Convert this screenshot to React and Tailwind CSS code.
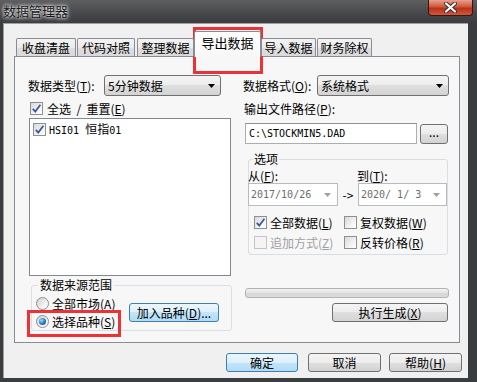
import React from 'react'

const btnFace = 'border-[#707070] bg-[linear-gradient(#f4f4f4,#ececec_50%,#dfdfdf_50%,#d3d3d3)]'
const btnFocus = 'border-[#3c7fb1] bg-[linear-gradient(#ecf6fd,#dcf0fc_50%,#c4e5fa_50%,#b0dbf5)]'

function Key({ k }) {
  return <span className="whitespace-nowrap">(<span className="underline underline-offset-1">{k}</span>)</span>
}

function Check({ on, off }) {
  return (
    <span className={`w-[13px] h-[13px] border flex items-center justify-center shrink-0 ${off ? 'border-[#c4c4c4] bg-[#f4f4f4]' : 'border-[#8e8f8f] bg-[linear-gradient(135deg,#d8d8d8,#f7f7f7_70%,#ffffff)]'}`}>
      {on && (
        <svg width="11" height="11" viewBox="0 0 11 11">
          <path d="M1.8 5.8 L4.3 8.6 L9.4 1.8" fill="none" stroke="#3d5a9e" strokeWidth="1.8" />
        </svg>
      )}
    </span>
  )
}

function Radio({ on }) {
  return (
    <span className="w-[13px] h-[13px] rounded-full border border-[#8e8f8f] bg-[linear-gradient(135deg,#cfcfcf,#f6f6f6_70%,#ffffff)] flex items-center justify-center shrink-0">
      {on && <span className="w-[7px] h-[7px] rounded-full bg-[radial-gradient(circle_at_35%_35%,#9adcfb,#1f78c1_55%,#0b4a86)]" />}
    </span>
  )
}

function Btn({ children, focus, className = '' }) {
  return (
    <div className={`h-[19px] rounded-[3px] border flex items-center justify-center text-[12px] leading-none text-black ${focus ? btnFocus : btnFace} ${className}`}>
      {children}
    </div>
  )
}

function Combo({ children, className = '' }) {
  return (
    <div className={`h-[21px] rounded-[3px] border ${btnFace} flex items-center pl-[3px] pr-[5px] ${className}`}>
      <span className="flex-1 text-[12px] leading-none">{children}</span>
      <svg width="7" height="4" viewBox="0 0 7 4"><path d="M0 0h7L3.5 4z" fill="#000" /></svg>
    </div>
  )
}

function DateBox({ children, className = '' }) {
  return (
    <div className={`h-[23px] border border-[#b8bcc0] bg-white flex items-center pl-[2px] pr-[6px] ${className}`}>
      <span className="flex-1 text-[10px] leading-none text-[#6d6d6d] font-['DejaVu_Sans_Mono',monospace] whitespace-pre">{children}</span>
      <svg width="7" height="4" viewBox="0 0 7 4"><path d="M0 0h7L3.5 4z" fill="#a0a0a0" /></svg>
    </div>
  )
}

function Tab({ label, w, ml }) {
  return (
    <div className={`${w} ${ml} h-[18px] border border-b-0 border-[#898c95] rounded-t-[2px] bg-[linear-gradient(#f3f3f3,#ebebeb_50%,#dedede_50%,#dadada)] flex items-center justify-center text-[12px] leading-none`}>
      {label}
    </div>
  )
}

export default function App() {
  return (
    <div className="relative w-[477px] h-[382px] flex flex-col bg-[#3a3d3f] overflow-hidden font-['Noto_Sans_CJK_SC',sans-serif] text-black">
      {/* title bar */}
      <div className="h-[23px] flex justify-between items-start bg-[linear-gradient(#5e5f60,#45474a_60%,#3b3d40)]">
        <span className="ml-[3px] mt-[3px] text-[13px] leading-[15px] text-[#1a1a1a] [text-shadow:0_0_5px_#ffffff,0_0_3px_#ffffff]">数据管理器</span>
        <div className="w-[45px] h-[16px] mr-[4px] rounded-b-[4px] border border-t-0 border-[#3b1510] bg-[linear-gradient(#e8a08e,#d0573d_45%,#b8321b_55%,#d0583c)] flex items-center justify-center">
          <svg width="13" height="11" viewBox="0 0 13 11">
            <path d="M2 1.5 L11 9.5 M11 1.5 L2 9.5" stroke="#3a2a2a" strokeWidth="4" strokeLinecap="round" />
            <path d="M2 1.5 L11 9.5 M11 1.5 L2 9.5" stroke="#ffffff" strokeWidth="2.2" strokeLinecap="round" />
          </svg>
        </div>
      </div>

      <div className="flex-1 flex pl-[3px] pb-[4px]">
        {/* client area */}
        <div className="w-[465px] h-[355px] bg-[#f0f0f0] border-l border-t border-[#a0a0a0] flex flex-col pl-[10px] pt-[7px]">
          {/* tab strip */}
          <div className="h-[25px] flex items-end relative z-10">
            <Tab label="收盘清盘" w="w-[60px]" ml="ml-[2px]" />
            <Tab label="代码对照" w="w-[58px]" ml="ml-[1px]" />
            <Tab label="整理数据" w="w-[57px]" ml="ml-[2px]" />
            <div className="w-[67px] h-[26px] -mb-px border border-b-0 border-[#898c95] rounded-t-[2px] bg-[linear-gradient(#ffffff,#f7f7f7)] flex items-center justify-center text-[13px] leading-none pb-[4px]">
              导出数据
            </div>
            <Tab label="导入数据" w="w-[55px]" ml="" />
            <Tab label="财务除权" w="w-[55px]" ml="ml-[1px]" />
          </div>

          {/* tab page */}
          <div className="w-[446px] h-[287px] border border-[#898c95] bg-[#f7f7f7] flex pl-[13px] pt-[18px] text-[12px] leading-none">
            {/* left column */}
            <div className="w-[204px] flex flex-col">
              <div className="h-[21px] flex items-center">
                <span className="w-[76px] whitespace-nowrap">数据类型<Key k="T" />:</span>
                <Combo className="w-[117px]">5分钟数据</Combo>
              </div>
              <div className="mt-[6px] ml-[2px] h-[13px] flex items-center gap-[4px]">
                <Check on />
                <span className="whitespace-pre">全选  /  重置<Key k="E" /></span>
              </div>
              <div className="mt-[3px] ml-[1px] w-[202px] h-[158px] border border-[#828790] bg-white pl-[3px] pt-[4px]">
                <div className="flex items-center gap-[3px]">
                  <Check on />
                  <span className="text-[10px] leading-none font-['DejaVu_Sans_Mono','Noto_Sans_CJK_SC',monospace]">HSI01 <span className="text-[12px] font-['Noto_Sans_CJK_SC',sans-serif]">恒指</span>01</span>
                </div>
              </div>
              <fieldset className="mt-[3px] ml-[3px] w-[201px] h-[52px] border border-[#d5dfe5] rounded-[3px] pl-[4px]">
                <legend className="ml-[2px] px-[2px] h-[12px] leading-[12px]">数据来源范围</legend>
                <div className="flex items-center pt-[6px]">
                  <div className="w-[93px] flex flex-col gap-[5px]">
                    <div className="h-[13px] flex items-center gap-[3px]">
                      <Radio />
                      <span>全部市场<Key k="A" /></span>
                    </div>
                    <div className="h-[13px] flex items-center gap-[3px]">
                      <Radio on />
                      <span>选择品种<Key k="S" /></span>
                    </div>
                  </div>
                  <Btn focus className="w-[90px]">加入品种<Key k="D" />...</Btn>
                </div>
              </fieldset>
            </div>

            {/* right column */}
            <div className="ml-[11px] w-[206px] flex flex-col">
              <div className="h-[21px] flex items-center">
                <span className="w-[74px] whitespace-nowrap">数据格式<Key k="O" />:</span>
                <Combo className="w-[132px]">系统格式</Combo>
              </div>
              <div className="mt-[6px] ml-[1px] h-[13px] flex items-center">
                <span>输出文件路径<Key k="P" />:</span>
              </div>
              <div className="mt-[8px] ml-[2px] flex items-center">
                <div className="w-[172px] h-[21px] border border-[#abadb3] border-t-[#8e9196] bg-white flex items-center pl-[3px]">
                  <span className="text-[10px] leading-none font-['DejaVu_Sans_Mono',monospace]">C:\STOCKMIN5.DAD</span>
                </div>
                <Btn className="ml-[3px] w-[28px] h-[20px] pb-[4px]">...</Btn>
              </div>
              <fieldset className="mt-[9px] ml-[5px] w-[200px] h-[102px] border border-[#d5dfe5] rounded-[3px]">
                <legend className="ml-[4px] px-[1px] h-[12px] leading-[12px]">选项</legend>
                <div className="-ml-px pt-[5px] flex flex-col">
                  <div className="h-[12px] flex items-center">
                    <span className="w-[109px]">从<Key k="F" />:</span>
                    <span>到<Key k="T" />:</span>
                  </div>
                  <div className="mt-[1px] flex items-center">
                    <DateBox className="w-[90px]">2017/10/26</DateBox>
                    <span className="w-[20px] text-center text-[12px]">-&gt;</span>
                    <DateBox className="w-[89px]">2020/ 1/ 3</DateBox>
                  </div>
                  <div className="mt-[10px] pl-[6px] flex flex-col gap-[7px]">
                    <div className="h-[13px] flex items-center">
                      <div className="w-[90px] flex items-center gap-[3px]"><Check on /><span>全部数据<Key k="L" /></span></div>
                      <div className="flex items-center gap-[3px]"><Check /><span>复权数据<Key k="W" /></span></div>
                    </div>
                    <div className="h-[13px] flex items-center">
                      <div className="w-[90px] flex items-center gap-[3px] text-[#a0a0a0]"><Check off /><span>追加方式<Key k="Z" /></span></div>
                      <div className="flex items-center gap-[3px]"><Check /><span>反转价格<Key k="R" /></span></div>
                    </div>
                  </div>
                </div>
              </fieldset>
              <div className="mt-[33px] ml-[2px] w-[204px] h-[10px] rounded-[3px] border border-[#b2b2b2] bg-[linear-gradient(#f3f3f3,#e2e2e2_50%,#d6d6d6_50%,#dcdcdc)]" />
              <div className="mt-[5px] flex justify-end pr-[1px]">
                <Btn className="w-[116px]">执行生成<Key k="X" /></Btn>
              </div>
            </div>
          </div>

          {/* bottom buttons */}
          <div className="mt-[10px] flex pl-[212px]">
            <Btn focus className="w-[72px]">确定</Btn>
            <Btn className="ml-[10px] w-[73px]">取消</Btn>
            <Btn className="ml-[8px] w-[73px]">帮助<Key k="H" /></Btn>
          </div>
        </div>
      </div>

      {/* red annotation boxes */}
      <div className="absolute left-[193px] top-[27px] w-[70px] h-[47px] border-[3px] border-[#ec3237] pointer-events-none" />
      <div className="absolute left-[27px] top-[310px] w-[94px] h-[27px] border-[3px] border-[#ec3237] pointer-events-none" />
    </div>
  )
}
